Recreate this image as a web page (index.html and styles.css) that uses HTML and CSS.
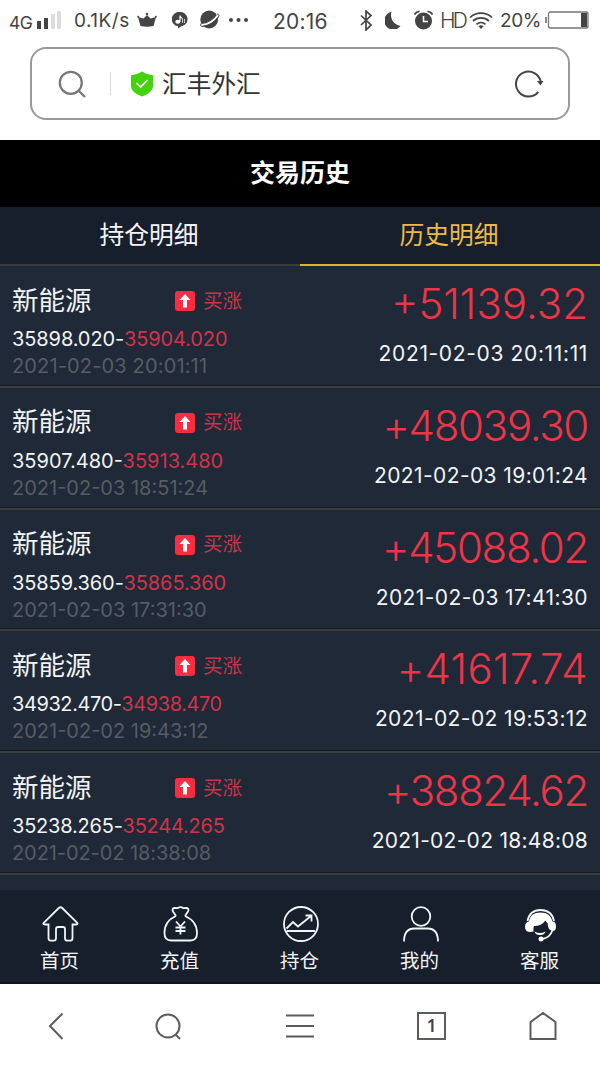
FILE: index.html
```html
<!DOCTYPE html>
<html lang="zh-CN">
<head>
    <meta charset="UTF-8">
    <meta name="viewport" content="width=device-width, initial-scale=1.0">
    <title>交易历史</title>
    <link rel="stylesheet" href="styles.css">
</head>
<body>

    <div class="status-bar">
        <span class="network">4G</span>
        <svg class="signal" width="24" height="19" viewBox="0 0 24 19">
            <path d="M0 10h4v8H0zM7 7h4v11H7z" fill="#444"/>
            <path d="M14 3h4v15h-4zM20 0h4v18h-4z" fill="#dcdcdc"/>
        </svg>
        <span class="speed">0.1K/s</span>
        <svg class="crown" width="20" height="16" viewBox="0 0 20 16">
            <path d="M1 5l5.500 1.500L10 3l3.500 3.500L19 5l-2.500 9q-6.500 1.500-13 0z" fill="#444"/>
            <circle cx="10" cy="2" r="1.200" fill="#444"/>
            <circle cx="1.200" cy="4.800" r="1" fill="#444"/>
            <circle cx="18.800" cy="4.800" r="1" fill="#444"/>
        </svg>
        <svg class="music" width="16" height="17" viewBox="0 0 16 17">
            <path d="M8 0a7.200 7.200 0 0 1 1.500 14.300L6 16.500V14.300A7.200 7.200 0 0 1 8 0z" fill="#444"/>
            <path d="M8 9.500V3.500q0 2 2 2.500" fill="none" stroke="#fff" stroke-width="1.200"/>
            <ellipse cx="5.800" cy="9.700" rx="2.500" ry="2" fill="#fff"/>
            <path d="M10.500 6v5M12.500 7v4" stroke="#ccc" stroke-width="1"/>
        </svg>
        <svg class="planet" width="20" height="20" viewBox="0 0 20 20">
            <circle cx="9.200" cy="9.500" r="8.900" fill="#444"/>
            <path d="M1.500 15Q12 14 18 5" fill="none" stroke="#fff" stroke-width="1.800"/>
            <path d="M1 13.500Q-.5 16.500 3 16.500 12 15.500 18.500 7 20 4 17 4" fill="none" stroke="#444" stroke-width="1"/>
        </svg>
        <svg class="dots" width="20" height="4" viewBox="0 0 20 4">
            <g fill="#444"><circle cx="2" cy="2" r="2"/><circle cx="9.500" cy="2" r="2"/><circle cx="17" cy="2" r="2"/></g>
        </svg>
        <span class="clock">20:16</span>
        <svg class="bluetooth" width="12" height="21" viewBox="0 0 12 21">
            <path d="M1 5.500l10 9.500-5 5V1l5 4.500L1 15" fill="none" stroke="#444" stroke-width="1.700"/>
        </svg>
        <svg class="moon" width="16" height="18" viewBox="0 0 16 18">
            <path d="M6.500 0.800A9 9 0 1 0 15.500 15 11 11 0 0 1 6.500 0.800z" fill="#444"/>
        </svg>
        <svg class="alarm" width="19" height="20" viewBox="0 0 19 20">
            <circle cx="9.500" cy="11" r="8.500" fill="#444"/>
            <path d="M0.500 4.500Q2 1.500 5.500 1.300M18.500 4.500Q17 1.500 13.500 1.300" fill="none" stroke="#444" stroke-width="1.800"/>
            <path d="M9.500 6v5.500h4.500" fill="none" stroke="#fff" stroke-width="1.600"/>
        </svg>
        <span class="hd">HD</span>
        <svg class="wifi" width="24" height="17" viewBox="0 0 24 17">
            <path d="M1 5.500a16 16 0 0 1 22 0M4 9a12 12 0 0 1 16 0M7.500 12.300a7 7 0 0 1 9 0" fill="none" stroke="#444" stroke-width="1.700"/>
            <path d="M9.500 14.200a4 4 0 0 1 5 0L12 17z" fill="#444"/>
        </svg>
        <span class="percent">20%</span>
        <svg class="battery" width="44" height="18" viewBox="0 0 44 18">
            <rect x="3.500" y="1" width="39.500" height="16" rx="2" fill="none" stroke="#777" stroke-width="1.300"/>
            <path d="M1 6v6" stroke="#666" stroke-width="1.600"/>
            <path d="M36 2h6v14h-6z" fill="#444"/>
        </svg>
    </div>

    <div class="address-bar">
        <svg class="search" width="28" height="28" viewBox="0 0 28 28">
            <g fill="none" stroke="#777" stroke-width="2.300"><circle cx="12.800" cy="12.800" r="11"/><path d="M20.500 20.500l6.500 6.500"/></g>
        </svg>
        <span class="divider"></span>
        <svg class="shield" width="24" height="26" viewBox="0 0 24 26">
            <path d="M12 0.500q5 3.500 11 3.800v10.500c0 5-5 8.500-11 10.700C6 23.300 1 19.800 1 14.800V4.300Q7 4 12 .500z" fill="#42d30b"/>
            <path d="M6.500 12l4 4 7-7" fill="none" stroke="#fff" stroke-width="1.700"/>
        </svg>
        <span class="site-name">汇丰外汇</span>
        <svg class="reload" width="30" height="30" viewBox="0 0 30 30">
            <path d="M24.300 22.800A12.500 12.500 0 1 1 26.800 13" fill="none" stroke="#444" stroke-width="2"/>
            <path d="M23 12h6.500L26.500 16.500z" fill="#444"/>
        </svg>
    </div>

    <header class="page-title">交易历史</header>

    <div class="tabs">
        <div class="tab">持仓明细</div>
        <div class="tab active">历史明细</div>
    </div>

    <div class="list" id="list"></div>

    <nav class="app-nav">
        <div class="nav-item">
            <svg width="38" height="38" viewBox="0 0 38 38">
                <path d="M7.500 19.500H3.800q-2.500 0-.8-2L17.800 3q1.700-1.500 3.400 0L36 17.500q1.500 2-.8 2h-3.700V33q0 2.700-2 2.700h-3.500q-2 0-2-2.700V24q0-2-2-2h-5q-2 0-2 2v9q0 2.700-2 2.700H9.500q-2 0-2-2.700z"/>
            </svg>
            <span>首页</span>
        </div>
        <div class="nav-item">
            <svg width="38" height="38" viewBox="0 0 38 38">
                <path d="M15 11L12 6.500q-1.500-3 1.500-3.500l3 .2q3-2 6 0l3-.2q3 .5 1.500 3.500l-3 4.500M15 11C8 14 3.500 20 3.500 28q0 7.500 6.500 7.500h19.500q6.500 0 6.500-7.500c0-8-5-14-12-17"/>
                <path d="M15 16.500l4.500 5 4.500-5M19.500 21.500v8M14.500 22.500h10M14.500 26h10"/>
            </svg>
            <span>充值</span>
        </div>
        <div class="nav-item">
            <svg width="38" height="38" viewBox="0 0 38 38">
                <circle cx="20" cy="19" r="17"/>
                <path d="M5.500 23.500l6.500-6.500 5 4.500L30 11M24.500 10.500H30.500V16.500M5.500 26h28.500"/>
            </svg>
            <span>持仓</span>
        </div>
        <div class="nav-item">
            <svg width="38" height="38" viewBox="0 0 38 38">
                <circle cx="20" cy="11.500" r="9.300"/>
                <path d="M3 36.500c0-9 4-13 10.500-13h13c6.500 0 10.500 4 10.500 13"/>
            </svg>
            <span>我的</span>
        </div>
        <div class="nav-item">
            <svg class="service" width="38" height="38" viewBox="0 0 38 38">
                <path class="line" d="M6.500 16C8 8.500 13 5 19.500 5s12 3.500 13.500 11"/>
                <path class="solid" d="M8 16.500C9 10.500 13 7.500 19.500 7.500S30 10.500 31.500 16.500q3.500 0 3.500 5t-4 4.500L28 24q-1-2-1.500-6-1.500-1-2-2.500-4 5.500-11.500 5.500-1 2-.5 5.500l-3 .5q-5.500 0-5.500-5t4-5.500z"/>
                <path class="solid" d="M13.500 26.500q5.500 3 11 0-1 3.500-5.500 3.500t-5.500-3.500z"/>
                <path d="M31.500 25Q29 33 21 34"/>
                <circle class="solid" cx="20" cy="34" r="2.500"/>
            </svg>
            <span>客服</span>
        </div>
    </nav>

    <div class="browser-nav">
        <svg class="back" width="28" height="30" viewBox="0 0 28 30"><path d="M19.500 2.500L7 15l12.500 13"/></svg>
        <svg class="find" width="28" height="30" viewBox="0 0 28 30"><circle cx="14" cy="15" r="11.500"/><path d="M21.500 23.500l4.500 4.500"/></svg>
        <svg class="menu" width="30" height="30" viewBox="0 0 30 30"><path d="M1 4.500h28M1 15h28M1 25.500h28"/></svg>
        <span class="tab-count">1</span>
        <svg class="home" width="28" height="30" viewBox="0 0 28 30"><path d="M1.500 11L14 2l12.500 9V28h-25z"/></svg>
    </div>

    <script>
        const trades = [
            { open: "35898.020", close: "35904.020", start: "2021-02-03 20:01:11", profit: "+51139.32", end: "2021-02-03 20:11:11" },
            { open: "35907.480", close: "35913.480", start: "2021-02-03 18:51:24", profit: "+48039.30", end: "2021-02-03 19:01:24" },
            { open: "35859.360", close: "35865.360", start: "2021-02-03 17:31:30", profit: "+45088.02", end: "2021-02-03 17:41:30" },
            { open: "34932.470", close: "34938.470", start: "2021-02-02 19:43:12", profit: "+41617.74", end: "2021-02-02 19:53:12" },
            { open: "35238.265", close: "35244.265", start: "2021-02-02 18:38:08", profit: "+38824.62", end: "2021-02-02 18:48:08" }
        ];

        // Build one row per closed trade
        document.getElementById("list").innerHTML = trades.map(t => `
            <div class="trade">
                <div class="left">
                    <div class="top">
                        <span class="name">新能源</span>
                        <svg class="up" width="20" height="20" viewBox="0 0 20 20">
                            <rect width="20" height="20" rx="3" fill="#fb2c40"/>
                            <path d="M10 3l5.500 6H12v7.500H8V9H4.500z" fill="#fff"/>
                        </svg>
                        <span class="direction">买涨</span>
                    </div>
                    <div class="price">${t.open}-<span class="close">${t.close}</span></div>
                    <div class="start">${t.start}</div>
                </div>
                <div class="right">
                    <div class="profit">${t.profit}</div>
                    <div class="end">${t.end}</div>
                </div>
            </div>`).join("");
    </script>

</body>
</html>
```
FILE: styles.css
```css
* {
    box-sizing: border-box;
}
body {
    margin: 0;
    width: 600px;
    height: 1067px;
    overflow: hidden;
    background-color: #fff;
    font-family: Inter, "Noto Sans CJK SC", sans-serif;
    display: flex;
    flex-direction: column;
}
svg {
    display: block;
    flex: none;
}
.status-bar {
    height: 40px;
    padding-left: 9px;
    display: flex;
    align-items: center;
    color: #444;
    font-size: 20px;
    white-space: nowrap;
}
.network {
    width: 28px;
    font-size: 17.5px;
    letter-spacing: -0.5px;
    padding-top: 4px;
}
.speed {
    width: 62px;
    margin-left: 13px;
    font-size: 19px;
    letter-spacing: 0.5px;
    padding-top: 1px;
}
.crown {
    margin-left: 1px;
}
.music {
    margin-left: 15px;
}
.planet {
    margin-left: 12px;
}
.dots {
    margin-left: 9px;
}
.clock {
    width: 60px;
    margin-left: 24px;
    padding-top: 2px;
    font-size: 21px;
    letter-spacing: 0.2px;
}
.bluetooth {
    margin-left: 27px;
}
.moon {
    margin-left: 13px;
}
.alarm {
    margin-left: 13px;
}
.hd {
    width: 26px;
    margin-left: 7px;
    font-size: 21px;
    font-weight: 300;
    letter-spacing: -2.8px;
}
.wifi {
    margin-left: 3px;
}
.percent {
    width: 42px;
    margin-left: 7px;
    padding-top: 1px;
    font-size: 19px;
    letter-spacing: -0.4px;
}
.battery {
    margin-left: 3px;
}
.address-bar {
    width: 540px;
    height: 73px;
    margin: 7px 30px 20px;
    padding: 0 24px 0 26px;
    border: 2px solid #999;
    border-radius: 16px;
    display: flex;
    align-items: center;
}
.divider {
    width: 1px;
    height: 23px;
    margin: 0 19px 0 24px;
    background-color: #ddd;
}
.site-name {
    margin-left: 8px;
    padding-bottom: 4px;
    font-size: 24.7px;
    color: #333;
}
.reload {
    margin-left: auto;
}
.page-title {
    height: 67px;
    background-color: #000;
    color: #fff;
    font-size: 25px;
    font-weight: bold;
    line-height: 66px;
    text-align: center;
}
.tabs {
    display: flex;
    height: 59px;
    background-color: #171f2d;
}
.tab {
    width: 300px;
    padding-right: 2px;
    border-bottom: 2px solid #3c3c3c;
    color: #f2f4f7;
    font-size: 24.8px;
    line-height: 57px;
    text-align: center;
}
.tab.active {
    border-color: #e3ae35;
    color: #edb947;
}
.list {
    height: 624px;
    background-color: #1f2937;
    overflow: hidden;
}
.trade {
    height: 121.8px;
    padding: 14px 12px 0;
    border-bottom: 2px solid #3b3c3e;
    box-shadow: inset 0 -1px #181c22;
    display: flex;
    justify-content: space-between;
}
.top {
    height: 40px;
    display: flex;
    align-items: center;
}
.name {
    width: 163px;
    padding-bottom: 4px;
    color: #f2f4f7;
    font-size: 26.5px;
}
.up {
    margin-top: 2px;
}
.direction {
    margin-left: 8px;
    padding-bottom: 2px;
    color: #c93549;
    font-size: 19.6px;
}
.price {
    height: 30px;
    color: #f2f4f7;
    font-size: 20px;
    letter-spacing: -0.1px;
    line-height: 38px;
}
.close {
    color: #d13449;
}
.start {
    color: #565d64;
    font-size: 20px;
    line-height: 33px;
}
.right {
    text-align: right;
}
.profit {
    color: #ee3548;
    font-size: 42px;
    font-weight: 300;
    line-height: 48px;
}
.end {
    color: #f2f4f7;
    font-size: 21px;
    letter-spacing: 0.4px;
    line-height: 51px;
}

/* Keep the figures of each row evenly set: rows with many 1s run short */
.trade:nth-child(1) .end {
    letter-spacing: 0.64px;
}
.trade:nth-child(5) .end {
    letter-spacing: 0.27px;
}
.trade:nth-child(1) .start {
    letter-spacing: 0.15px;
}
.trade:nth-child(5) .start {
    letter-spacing: -0.08px;
}
.trade:nth-child(2) .profit,
.trade:nth-child(3) .profit,
.trade:nth-child(5) .profit {
    letter-spacing: -1.3px;
}
.trade:nth-child(4) .profit {
    letter-spacing: 0.3px;
}
.trade:nth-child(2) .price {
    letter-spacing: 0;
}
.trade:nth-child(4) .price {
    letter-spacing: -0.42px;
}
.trade:nth-child(5) .price {
    letter-spacing: -0.2px;
}
.app-nav {
    height: 94px;
    padding-top: 15px;
    background-color: #171f2d;
    display: flex;
    border-bottom: 2px solid #0e141e;
}
.nav-item {
    width: 120px;
    display: flex;
    flex-direction: column;
    align-items: center;
    color: #f2f4f7;
    font-size: 19.5px;
    line-height: 36px;
}
.nav-item svg {
    fill: none;
    stroke: #f2f4f7;
    stroke-width: 1.8;
}
.nav-item span {
    padding-right: 1px;
}
.nav-item .solid {
    fill: #fff;
    stroke: none;
}
.browser-nav {
    height: 83px;
    padding-left: 43px;
    display: flex;
    align-items: center;
}
.browser-nav svg {
    fill: none;
    stroke: #5c5c5c;
    stroke-width: 2;
}
.find {
    margin-left: 83px;
}
.menu {
    margin-left: 103px;
}
.tab-count {
    width: 29px;
    height: 28px;
    margin-left: 102px;
    border: 2px solid #5c5c5c;
    color: #444;
    font-family: "Noto Sans", sans-serif;
    font-size: 17px;
    font-weight: 600;
    line-height: 24px;
    text-align: center;
}
.home {
    margin-left: 83px;
}
```
